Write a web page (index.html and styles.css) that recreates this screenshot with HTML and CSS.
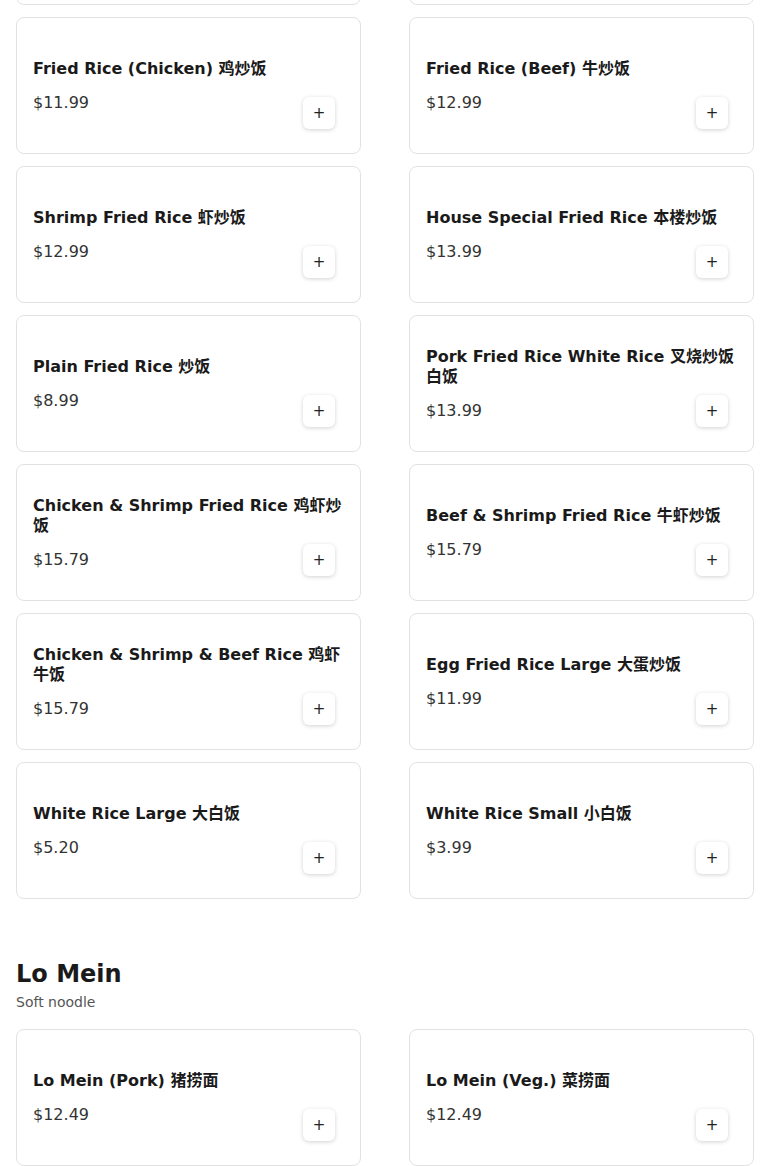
FILE: index.html
```html
<!DOCTYPE html>
<html lang="en">

<head>
    <meta charset="UTF-8">
    <meta name="viewport" content="width=device-width, initial-scale=1.0">
    <title>Menu</title>
    <link rel="stylesheet" href="styles.css">
</head>

<body>
    <main class="menu">
        <section class="menu-section section-scrolled">
            <div class="item-grid">
                <div class="item-card">
                    <div class="item-info">
                        <h3 class="item-name">Fried Rice (Pork) 叉烧炒饭</h3>
                        <p class="item-price">$11.99</p>
                    </div>
                    <button class="add-btn">+</button>
                </div>
                <div class="item-card">
                    <div class="item-info">
                        <h3 class="item-name">Fried Rice (Veg.) 菜炒饭</h3>
                        <p class="item-price">$10.99</p>
                    </div>
                    <button class="add-btn">+</button>
                </div>
                <div class="item-card">
                    <div class="item-info">
                        <h3 class="item-name">Fried Rice (Chicken) 鸡炒饭</h3>
                        <p class="item-price">$11.99</p>
                    </div>
                    <button class="add-btn">+</button>
                </div>
                <div class="item-card">
                    <div class="item-info">
                        <h3 class="item-name">Fried Rice (Beef) 牛炒饭</h3>
                        <p class="item-price">$12.99</p>
                    </div>
                    <button class="add-btn">+</button>
                </div>
                <div class="item-card">
                    <div class="item-info">
                        <h3 class="item-name">Shrimp Fried Rice 虾炒饭</h3>
                        <p class="item-price">$12.99</p>
                    </div>
                    <button class="add-btn">+</button>
                </div>
                <div class="item-card">
                    <div class="item-info">
                        <h3 class="item-name">House Special Fried Rice 本楼炒饭</h3>
                        <p class="item-price">$13.99</p>
                    </div>
                    <button class="add-btn">+</button>
                </div>
                <div class="item-card">
                    <div class="item-info">
                        <h3 class="item-name">Plain Fried Rice 炒饭</h3>
                        <p class="item-price">$8.99</p>
                    </div>
                    <button class="add-btn">+</button>
                </div>
                <div class="item-card">
                    <div class="item-info">
                        <h3 class="item-name">Pork Fried Rice White Rice 叉烧炒饭白饭</h3>
                        <p class="item-price">$13.99</p>
                    </div>
                    <button class="add-btn">+</button>
                </div>
                <div class="item-card">
                    <div class="item-info">
                        <h3 class="item-name">Chicken &amp; Shrimp Fried Rice 鸡虾炒饭</h3>
                        <p class="item-price">$15.79</p>
                    </div>
                    <button class="add-btn">+</button>
                </div>
                <div class="item-card">
                    <div class="item-info">
                        <h3 class="item-name">Beef &amp; Shrimp Fried Rice 牛虾炒饭</h3>
                        <p class="item-price">$15.79</p>
                    </div>
                    <button class="add-btn">+</button>
                </div>
                <div class="item-card">
                    <div class="item-info">
                        <h3 class="item-name">Chicken &amp; Shrimp &amp; Beef Rice 鸡虾牛饭</h3>
                        <p class="item-price">$15.79</p>
                    </div>
                    <button class="add-btn">+</button>
                </div>
                <div class="item-card">
                    <div class="item-info">
                        <h3 class="item-name">Egg Fried Rice Large 大蛋炒饭</h3>
                        <p class="item-price">$11.99</p>
                    </div>
                    <button class="add-btn">+</button>
                </div>
                <div class="item-card">
                    <div class="item-info">
                        <h3 class="item-name">White Rice Large 大白饭</h3>
                        <p class="item-price">$5.20</p>
                    </div>
                    <button class="add-btn">+</button>
                </div>
                <div class="item-card">
                    <div class="item-info">
                        <h3 class="item-name">White Rice Small 小白饭</h3>
                        <p class="item-price">$3.99</p>
                    </div>
                    <button class="add-btn">+</button>
                </div>
            </div>
        </section>

        <section class="menu-section">
            <div class="section-head">
                <h2 class="section-title">Lo Mein</h2>
                <p class="section-sub">Soft noodle</p>
            </div>
            <div class="item-grid">
                <div class="item-card">
                    <div class="item-info">
                        <h3 class="item-name">Lo Mein (Pork) 猪捞面</h3>
                        <p class="item-price">$12.49</p>
                    </div>
                    <button class="add-btn">+</button>
                </div>
                <div class="item-card">
                    <div class="item-info">
                        <h3 class="item-name">Lo Mein (Veg.) 菜捞面</h3>
                        <p class="item-price">$12.49</p>
                    </div>
                    <button class="add-btn">+</button>
                </div>
            </div>
        </section>
    </main>
</body>

</html>
```

FILE: styles.css
```css
body {
    margin: 0;
    font-family: "DejaVu Sans", "Noto Sans CJK SC", sans-serif;
    color: #1a1a1a;
    background-color: #fff;
}

.menu {
    padding: 0 16px;
}

/* page is scrolled: first row sits above the viewport */
.section-scrolled {
    margin-top: -132px;
}

.menu-section {
    margin-bottom: 60px;
}

.section-head {
    margin-bottom: 18px;
}

.section-title {
    margin: 0;
    font-size: 24px;
    line-height: 30px;
    font-weight: bold;
}

.section-sub {
    margin: 4px 0 0;
    font-size: 14px;
    line-height: 18px;
    color: #555;
}

.item-grid {
    display: grid;
    grid-template-columns: 1fr 1fr;
    column-gap: 48px;
    row-gap: 12px;
}

/* info and button share one cell, the button sits in the bottom corner */
.item-card {
    display: grid;
    grid-template-areas: "cell";
    min-height: 103px;
    padding: 16px;
    border: 1px solid #e2e2e2;
    border-radius: 8px;
    background-color: #fff;
}

.item-info {
    grid-area: cell;
    align-self: center;
    min-width: 0;
}

.item-name {
    margin: 0 0 14px;
    font-size: 16px;
    line-height: 20px;
    font-weight: bold;
    color: #1a1a1a;
}

.item-price {
    margin: 0;
    font-size: 16px;
    line-height: 19px;
    color: #333;
}

.add-btn {
    grid-area: cell;
    justify-self: end;
    align-self: end;
    width: 32px;
    height: 32px;
    margin: 0 9px 8px 0;
    padding: 0;
    border: 0;
    border-radius: 6px;
    background-color: #fff;
    box-shadow: 0 1px 4px rgba(0, 0, 0, 0.18);
    font-family: "DejaVu Sans", sans-serif;
    font-size: 15px;
    line-height: 32px;
    color: #222;
    cursor: pointer;
}
```
